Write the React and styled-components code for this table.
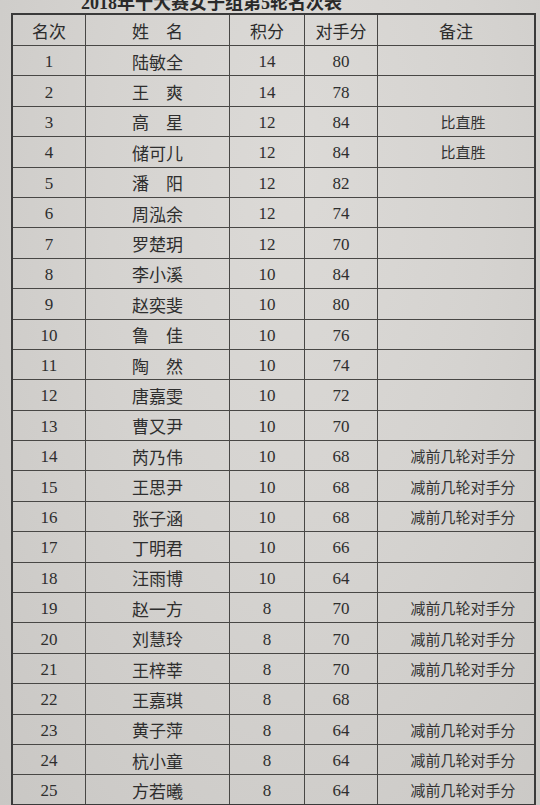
import React from 'react';
import styled, { createGlobalStyle } from 'styled-components';

const GlobalStyle = createGlobalStyle`
    html, body {
        margin: 0;
        padding: 0;
        background: #d3d1ce;
    }
`;

const rows = [
    [1, '陆敏全', 14, 80, ''],
    [2, '王　爽', 14, 78, ''],
    [3, '高　星', 12, 84, '比直胜'],
    [4, '储可儿', 12, 84, '比直胜'],
    [5, '潘　阳', 12, 82, ''],
    [6, '周泓余', 12, 74, ''],
    [7, '罗楚玥', 12, 70, ''],
    [8, '李小溪', 10, 84, ''],
    [9, '赵奕斐', 10, 80, ''],
    [10, '鲁　佳', 10, 76, ''],
    [11, '陶　然', 10, 74, ''],
    [12, '唐嘉雯', 10, 72, ''],
    [13, '曹又尹', 10, 70, ''],
    [14, '芮乃伟', 10, 68, '减前几轮对手分'],
    [15, '王思尹', 10, 68, '减前几轮对手分'],
    [16, '张子涵', 10, 68, '减前几轮对手分'],
    [17, '丁明君', 10, 66, ''],
    [18, '汪雨博', 10, 64, ''],
    [19, '赵一方', 8, 70, '减前几轮对手分'],
    [20, '刘慧玲', 8, 70, '减前几轮对手分'],
    [21, '王梓莘', 8, 70, '减前几轮对手分'],
    [22, '王嘉琪', 8, 68, ''],
    [23, '黄子萍', 8, 64, '减前几轮对手分'],
    [24, '杭小童', 8, 64, '减前几轮对手分'],
    [25, '方若曦', 8, 64, '减前几轮对手分'],
];

function App() {
    return (
        <Paper>
            <GlobalStyle />
            <TitleStrip>
                <Title>2018年十大赛女子组第5轮名次表</Title>
            </TitleStrip>
            <Sheet>
                <thead>
                    <tr>
                        <Head>名次</Head>
                        <Head>姓　名</Head>
                        <Head>积分</Head>
                        <Head>对手分</Head>
                        <Head>备注</Head>
                    </tr>
                </thead>
                <tbody>
                    {rows.map(([rank, name, score, opp, note]) => (
                        <Row key={rank}>
                            <Num>{rank}</Num>
                            <Name>{name}</Name>
                            <Num>{score}</Num>
                            <Num>{opp}</Num>
                            <Note>{note}</Note>
                        </Row>
                    ))}
                </tbody>
            </Sheet>
        </Paper>
    );
}

export default App;

const Paper = styled.div`
    width: 540px;
    height: 805px;
    overflow: hidden;
    box-sizing: border-box;
    padding-left: 11px;
    background: radial-gradient(
        ellipse at 55% 20%,
        #dcdad7 0%,
        #d5d3d0 45%,
        #c9c7c4 100%
    );
    color: #2e2e2e;
    font-family: 'Liberation Serif', 'Noto Sans CJK SC', serif;
`;

const TitleStrip = styled.div`
    height: 12px;
    overflow: hidden;
    display: flex;
    align-items: flex-end;
    padding-left: 70px;
`;

const Title = styled.div`
    font-size: 18px;
    line-height: 1;
    font-weight: bold;
    color: #2a2a2a;
    white-space: nowrap;
`;

const Sheet = styled.table`
    margin-top: 1px;
    width: 525px;
    border-collapse: collapse;
    table-layout: fixed;
    border: 2px solid #3a3a3a;
`;

const Cell = styled.td`
    border: 1.5px solid #484745;
    text-align: center;
    vertical-align: middle;
    padding: 0;
    white-space: nowrap;
`;

const Head = styled(Cell).attrs({ as: 'th' })`
    height: 30px;
    font-size: 17px;
    font-weight: normal;
    color: #2c2c2c;

    &:nth-child(1) { width: 72px; }
    &:nth-child(2) { width: 143px; }
    &:nth-child(3) { width: 74px; }
    &:nth-child(4) { width: 72px; }
`;

const Row = styled.tr`
    height: 30.4px;
`;

const Num = styled(Cell)`
    font-size: 17px;
    padding-top: 3px;
`;

const Name = styled(Cell)`
    font-size: 17px;
    padding-top: 1px;
`;

const Note = styled(Cell)`
    font-size: 15px;
    padding-left: 14px;
    color: #333;
`;
